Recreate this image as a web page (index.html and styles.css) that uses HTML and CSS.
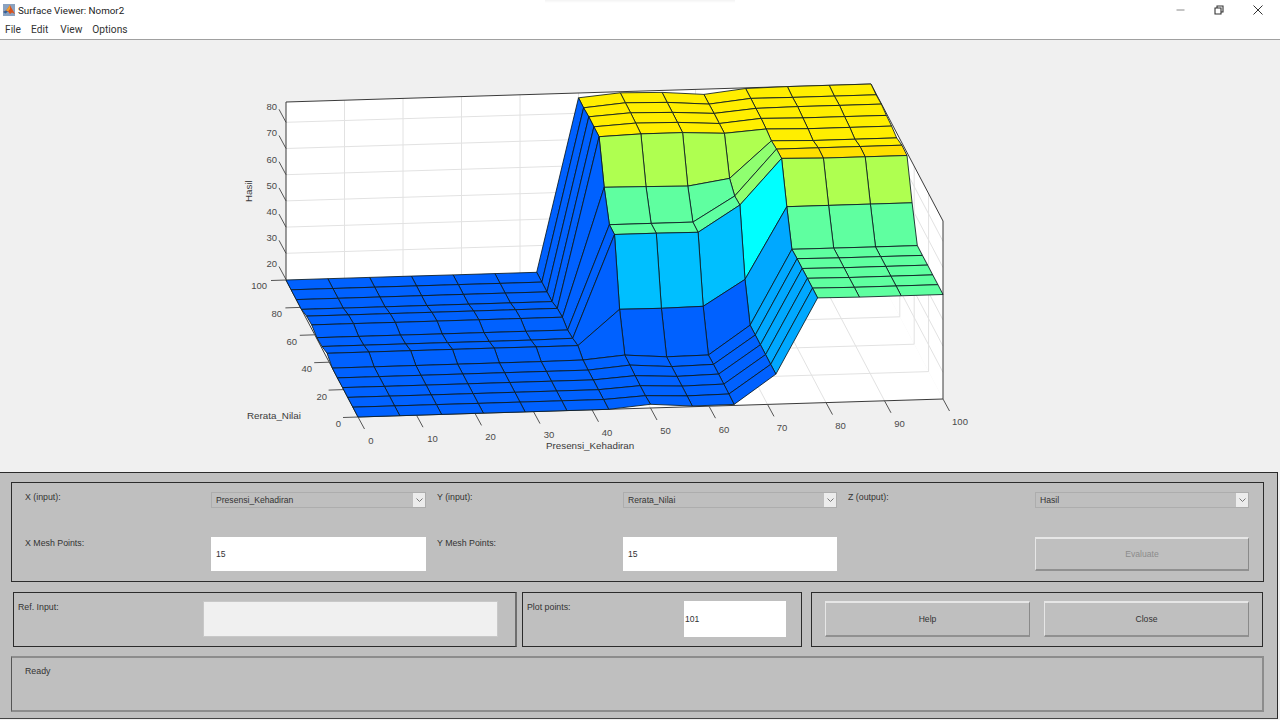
FILE: index.html
```html
<!DOCTYPE html>
<html lang="en">
<head>
<meta charset="utf-8">
<title>Surface Viewer: Nomor2</title>
<link rel="stylesheet" href="styles.css">
</head>
<body>
<div class="window">
  <header class="titlebar">
    <svg class="app-icon" viewBox="0 0 12 12" width="12" height="12">
      <rect width="12" height="12" fill="#8aa2c0"/>
      <path d="M0 8 L3 6.5 L5 4 L7 1 L8.5 4 L12 10 L9 8.5 L7 10 L5 7.5 L3 8 Z" fill="#d9531e"/>
      <path d="M5 4 L7 1 L7 5 L5 7.5 L3 6.8 Z" fill="#f0a030"/>
      <path d="M0 8 L3 6.5 L5 7.5 L2.5 9.5 Z" fill="#2f5f9a"/>
    </svg>
    <span class="title-text">Surface Viewer: Nomor2</span>
    <div class="win-controls">
      <svg class="win-btn" viewBox="0 0 9 10" width="9" height="10"><path d="M0.5 5 H8.5" stroke="#8a8a8a" fill="none"/></svg>
      <svg class="win-btn" viewBox="0 0 10 10" width="10" height="10"><path d="M1 3 H7 V9 H1 Z M3 3 V1 H9 V7 H7" stroke="#333" fill="none" stroke-width="1.1"/></svg>
      <svg class="win-btn" viewBox="0 0 10 10" width="10" height="10"><path d="M0.5 0.5 L9.5 9.5 M9.5 0.5 L0.5 9.5" stroke="#333" fill="none"/></svg>
    </div>
  </header>
  <nav class="menubar">
    <span class="menu-item">File</span>
    <span class="menu-item">Edit</span>
    <span class="menu-item">View</span>
    <span class="menu-item">Options</span>
  </nav>
  <main class="plot-area">
    <svg id="plot" class="plot" viewBox="0 40 1280 432" width="1280" height="432">
      <g id="walls"></g>
      <g id="grid"></g>
      <g id="ticks"></g>
      <g id="surface"></g>
      <g class="tick-label end">
        <text x="277" y="110">80</text><text x="277" y="136">70</text><text x="277" y="163">60</text>
        <text x="277" y="189">50</text><text x="277" y="215">40</text><text x="277" y="241">30</text>
        <text x="277" y="267">20</text>
        <text x="267" y="289">100</text><text x="282" y="317">80</text><text x="297" y="345">60</text>
        <text x="312" y="372">40</text><text x="327" y="400">20</text><text x="341" y="427">0</text>
      </g>
      <g class="tick-label mid">
        <text x="371" y="444">0</text><text x="432.5" y="442">10</text><text x="490.5" y="440">20</text>
        <text x="549" y="438">30</text><text x="607" y="436">40</text><text x="665.5" y="434">50</text>
        <text x="724" y="433">60</text><text x="782" y="431">70</text><text x="840.5" y="429">80</text>
        <text x="899.5" y="427">90</text><text x="960" y="425">100</text>
      </g>
      <g class="axis-label">
        <text x="546" y="449">Presensi_Kehadiran</text>
        <text x="247" y="419">Rerata_Nilai</text>
        <text class="vertical" transform="translate(252 202) rotate(-90)">Hasil</text>
      </g>
    </svg>
  </main>
  <section class="controls">
    <div class="panel panel-axes">
      <span class="label">X (input):</span>
      <div class="popup"><span>Presensi_Kehadiran</span><b class="chev"><svg viewBox="0 0 7 4" width="7" height="4"><path d="M0.5 0.5 L3.5 3.5 L6.5 0.5" fill="none" stroke="#777"/></svg></b></div>
      <span class="label label-pad">Y (input):</span>
      <div class="popup"><span>Rerata_Nilai</span><b class="chev"><svg viewBox="0 0 7 4" width="7" height="4"><path d="M0.5 0.5 L3.5 3.5 L6.5 0.5" fill="none" stroke="#777"/></svg></b></div>
      <span class="label label-pad">Z (output):</span>
      <div class="popup"><span>Hasil</span><b class="chev"><svg viewBox="0 0 7 4" width="7" height="4"><path d="M0.5 0.5 L3.5 3.5 L6.5 0.5" fill="none" stroke="#777"/></svg></b></div>
      <span class="label">X Mesh Points:</span>
      <div class="edit">15</div>
      <span class="label label-pad">Y Mesh Points:</span>
      <div class="edit">15</div>
      <span></span>
      <div class="button disabled">Evaluate</div>
    </div>
    <div class="panel-row">
      <div class="panel panel-ref">
        <span class="label">Ref. Input:</span>
        <div class="edit blank"></div>
      </div>
      <div class="panel panel-points">
        <span class="label">Plot points:</span>
        <div class="edit tight">101</div>
      </div>
      <div class="panel panel-buttons">
        <div class="button">Help</div>
        <div class="button">Close</div>
      </div>
    </div>
    <div class="status"><span class="label">Ready</span></div>
  </section>
</div>
<script src="plot.js"></script>
</body>
</html>
```
FILE: styles.css
```css
* { box-sizing: border-box; }
html, body { margin: 0; padding: 0; }
body {
  width: 1280px;
  height: 720px;
  overflow: hidden;
  background: #f0f0f0;
  font-family: "Liberation Sans", Arial, sans-serif;
}
.window { display: flex; flex-direction: column; height: 720px; }

.titlebar {
  position: relative;
  height: 20px;
  background: #fff;
  display: flex;
  align-items: center;
  padding-left: 3px;
  font-family: Roboto, sans-serif;
  font-size: 9.8px;
  color: #222;
}
.titlebar::after {
  content: "";
  position: absolute;
  left: 545px;
  top: 0;
  width: 190px;
  height: 3px;
  background: linear-gradient(#f3f3f3, #fff);
}
.app-icon { margin-right: 3px; }
.win-controls {
  margin-left: auto;
  display: flex;
  gap: 29px;
  padding-right: 17px;
}
.menubar {
  height: 20px;
  background: #fff;
  border-bottom: 1px solid #a0a0a0;
  display: flex;
  padding-left: 5px;
  font-family: Roboto, sans-serif;
  font-size: 10.2px;
  line-height: 20px;
  color: #333;
}
.menu-item:nth-child(2) { margin-left: 10px; }
.menu-item:nth-child(3) { margin-left: 12px; }
.menu-item:nth-child(4) { margin-left: 10px; }

.plot-area { height: 432px; background: #f0f0f0; }
.plot { display: block; }
.tick-label text { font-size: 9.5px; fill: #4a4a4a; }
.tick-label.end text { text-anchor: end; }
.tick-label.mid text { text-anchor: middle; }
.axis-label text { font-size: 9.8px; fill: #3a3a3a; }

.controls {
  width: 1278px;
  height: 247px;
  background: #bfbfbf;
  border-top: 1px solid #2a2a2a;
  border-right: 1px solid #2a2a2a;
  border-bottom: 1px solid #444;
  padding: 9px 13px 0 11px;
  display: flex;
  flex-direction: column;
}
.label { font-size: 8.8px; color: #333; line-height: 13px; }
.label-pad { padding-left: 11px; }

.panel { border: 1px solid #2b2b2b; }
.panel-axes {
  height: 100px;
  padding: 8px 0 0 13px;
  display: grid;
  grid-template-columns: 186px 215px 197px 214px 198px 214px;
  grid-template-rows: 17px 34px;
  row-gap: 29px;
}

.popup {
  height: 16px;
  margin-top: 1px;
  border: 1px solid #adadad;
  display: flex;
  align-items: center;
  justify-content: space-between;
  font-size: 8.6px;
  color: #333;
  padding-left: 4px;
}
.chev {
  width: 12px;
  height: 14px;
  background: #ececec;
  display: flex;
  align-items: center;
  justify-content: center;
}
.edit {
  background: #fff;
  font-size: 8.6px;
  color: #333;
  padding-left: 5px;
  display: flex;
  align-items: center;
}
.edit.tight { padding-left: 1px; }
.edit.blank { background: #f0f0f0; border: 1px solid #c8c8c8; }

.button {
  background: #bfbfbf;
  border-style: solid;
  border-width: 2px 1px;
  border-color: #e6e6e6 #8a8a8a #909090 #e6e6e6;
  font-size: 8.6px;
  color: #333;
  display: flex;
  align-items: center;
  justify-content: center;
}
.button.disabled { color: #8c8c8c; }

.panel-row {
  margin-top: 10px;
  height: 55px;
  display: flex;
  padding-left: 2px;
}
.panel-ref {
  width: 504px;
  padding: 8px 17px 9px 4px;
  display: flex;
  justify-content: space-between;
  border-right-width: 2px;
  border-right-color: #6e6e6e;
}
.panel-ref .edit { width: 295px; }
.panel-points {
  width: 280px;
  margin-left: 5px;
  padding: 8px 15px 9px 4px;
  display: flex;
  justify-content: space-between;
}
.panel-points .edit { width: 102px; }
.panel-buttons {
  width: 452px;
  margin-left: 9px;
  padding: 8px 13px 9px 13px;
  display: flex;
  justify-content: space-between;
}
.panel-buttons .button { width: 205px; }
.status {
  margin-top: 9px;
  height: 56px;
  border: 2px solid #8c8c8c;
  border-left: 1px solid #555;
  padding: 7px 0 0 13px;
  line-height: 0;
}
.status .label { display: block; }
```
FILE: plot.js
```js
(function () {
  var NS = 'http://www.w3.org/2000/svg';
  function el(parent, name, attrs) {
    var n = document.createElementNS(NS, name);
    for (var k in attrs) n.setAttribute(k, attrs[k]);
    document.getElementById(parent).appendChild(n);
    return n;
  }
  function line(parent, x1, y1, x2, y2, stroke, w) {
    el(parent, 'line', { x1: x1, y1: y1, x2: x2, y2: y2, stroke: stroke, 'stroke-width': w });
  }
  function poly(parent, pts, fill, stroke, w) {
    el(parent, 'polygon', {
      points: pts.map(function (p) { return p[0].toFixed(1) + ',' + p[1].toFixed(1); }).join(' '),
      fill: fill, stroke: stroke || 'none', 'stroke-width': w || 0, 'stroke-linejoin': 'round'
    });
  }

  // Orthographic projection. x,y in 0..100; h = height above the floor in pixels.
  function P(x, y, h) {
    return [358 + 5.85 * x - 0.72 * y, 417 - 0.18 * x - 1.37 * y - h];
  }
  var TOP = 178;
  var GRID = '#e2e2e2', AXIS = '#3a3a3a', k;

  poly('walls', [P(0,100,0), P(100,100,0), P(100,100,TOP), P(0,100,TOP)], '#fff');
  poly('walls', [P(100,0,0), P(100,100,0), P(100,100,TOP), P(100,0,TOP)], '#fff');
  poly('walls', [P(0,0,0), P(100,0,0), P(100,100,0), P(0,100,0)], '#fff');

  for (k = 10; k < 100; k += 10) {
    var a = P(k,100,0), b = P(k,100,TOP), c = P(k,0,0);
    line('grid', a[0], a[1], b[0], b[1], GRID, 1);
    line('grid', a[0], a[1], c[0], c[1], GRID, 1);
  }
  for (k = 20; k < 100; k += 20) {
    var d = P(0,k,0), e = P(100,k,0), f = P(100,k,TOP);
    line('grid', d[0], d[1], e[0], e[1], GRID, 1);
    line('grid', e[0], e[1], f[0], f[1], GRID, 1);
  }
  for (k = 0; k < 7; k++) {
    var hz = 0.5 + 26.2 * k + 0, g = P(0,100,hz), m = P(100,100,hz), n = P(100,0,hz);
    if (k > 0) {
      line('grid', g[0], g[1], m[0], m[1], GRID, 1);
      line('grid', m[0], m[1], n[0], n[1], GRID, 1);
    }
    line('ticks', g[0] - 7, g[1] - 13, g[0], g[1], '#555', 1);
  }

  var corners = [
    [P(0,100,TOP), P(100,100,TOP)], [P(0,100,TOP), P(0,100,0)],
    [P(100,100,TOP), P(100,0,TOP)], [P(100,0,TOP), P(100,0,0)],
    [P(0,0,0), P(100,0,0)], [P(0,0,0), P(0,100,0)]
  ];
  corners.forEach(function (s) { line('ticks', s[0][0], s[0][1], s[1][0], s[1][1], AXIS, 1); });

  for (k = 0; k <= 100; k += 10) {
    var tx = P(k,0,0);
    line('ticks', tx[0], tx[1], tx[0] + 6.5, tx[1] + 12, '#555', 1);
  }
  for (k = 0; k <= 100; k += 20) {
    var ty = P(0,k,0);
    line('ticks', ty[0], ty[1], ty[0] - 15, ty[1] + 0.5, '#555', 1);
  }

  // Surface heights (pixels above the floor): Z[i][j], i along x, j along y.
  var low = [0,0,0,0,0,0,5,2,1,4,3,0,0,0,0];
  var plateau = [104.5,104.5,104.5,104.5,104.5,104.5,137.5,175,175.5,173,175,176,177.5,177,178];
  var Z = [
    low, low, low, low, low, low,
    [0,0,0,0,0,0.4,5,2.5,1,4,3,0,0,0,0],
    [3.7,2.5,2.7,2.9,3.8,4,40,105,105,132.6,173.4,173.6,173.8,173,173.2],
    [0.7,1,1,1,1,1,39.7,105,105,132,175,176,176.5,176.7,176.9],
    [1,1.6,1.8,2,1.9,1.5,40.4,104.6,105,131.3,175,175.4,175.6,175.8,176],
    [30,30,30,30,30,30,66,130.6,129.9,137.7,173,173,173.3,172.8,172.7],
    [105,105,105,105,105,104.6,137.4,176,175.5,174,176,176.8,177,177.2,177.4],
    plateau, plateau, plateau
  ];
  function colour(h, j) {
    if (h < 15) return '#0061ff';
    if (h < 35) return '#00a8ff';
    if (h < 50) return '#00bfff';
    if (h < 80) return '#00ffff';
    if (h < 110) return '#5fffa0';
    if (h < 131) return '#8fff70';
    if (h < 150) return '#afff50';
    if (j === 7) return '#ffdf00';
    return '#ffee00';
  }
  function V(i, j) { return P(i * 100 / 14, j * 100 / 14, Z[i][j]); }
  for (var j = 13; j >= 0; j--) {
    for (var i = 13; i >= 0; i--) {
      poly('surface', [V(i,j), V(i+1,j), V(i+1,j+1), V(i,j+1)], colour(Z[i][j], j), '#0b1a20', 0.85);
    }
  }
})();
```
